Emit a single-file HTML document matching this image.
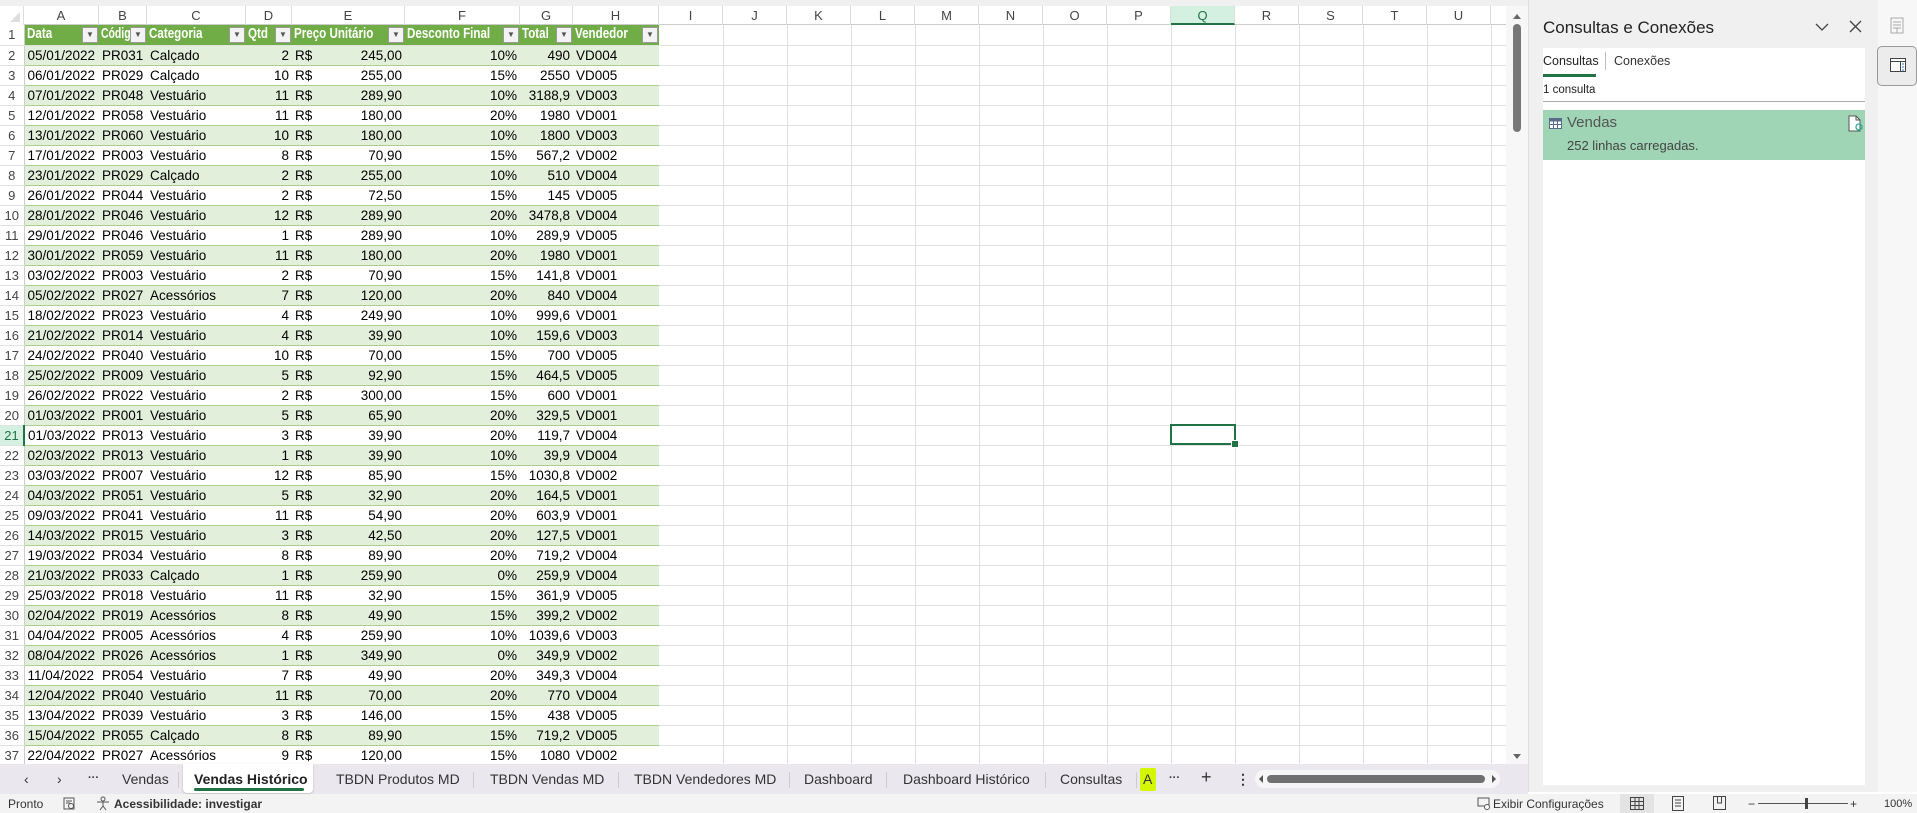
<!DOCTYPE html>
<html><head><meta charset="utf-8">
<style>
*{box-sizing:border-box;margin:0;padding:0}
body{width:1917px;height:813px;overflow:hidden;background:#fff;font-family:"Liberation Sans",sans-serif;position:relative;color:#000}
.top{position:absolute;left:0;top:0;width:1530px;height:6px;background:#f0f0f0}
.colh{position:absolute;top:6px;height:19px;left:0;width:1506px;background:#fff;border-bottom:1px solid #ccc}
.colh div{position:absolute;top:0;height:19px;border-right:1px solid #ddd;text-align:center;font-size:13px;line-height:19px;color:#444}
table{position:absolute;left:0;top:25px;width:1506px;border-collapse:collapse;table-layout:fixed;font-size:13.5px}
td{height:20px;padding:0 3px;white-space:nowrap;overflow:hidden;border-right:1px solid #e1e1e1;border-bottom:1px solid #e1e1e1;line-height:19px}
td.rh{text-align:center;color:#444;padding:0;border-right:1px solid #ccc;font-size:13px}
tr.g td.d{background:#e2efda}
td.d{border-bottom:1px solid #a9d08e;border-right:none}
td.hd{background:#70ad47;color:#fff;font-weight:bold;border-right:none;position:relative;padding:0 0 0 2px;font-size:14.5px}
td.hd span{display:inline-block;transform:scaleX(0.8);transform-origin:0 50%}
td.hd i{position:absolute;right:1px;top:2px;width:16px;height:16px;background:#f3f3f3;border:1px solid #999;font-style:normal;color:#555;font-size:8px;line-height:14px;text-align:center}
.r{text-align:right}
.sel{position:absolute;left:1170px;top:424px;width:66px;height:21px;border:2px solid #217346}
.sel:after{content:"";position:absolute;right:-5px;bottom:-5px;width:6px;height:6px;background:#217346;border:1px solid #fff}
.vs{position:absolute;left:1506px;top:6px;width:22px;height:760px;background:#f7f7f7}
.pbg{position:absolute;left:1528px;top:0;width:350px;height:792px;background:#f0f0f0;border-left:1px solid #ddd}
.side{position:absolute;left:1878px;top:0;width:39px;height:792px;background:#f7f7f7}
.tabs{position:absolute;left:0;top:764px;width:1528px;height:30px;background:#ebe7ee}
.tabs span{position:absolute;top:7px;font-size:14px;color:#333}
.tabs b.sep{position:absolute;top:8px;width:1px;height:16px;background:#ccc}
.status{position:absolute;left:0;top:794px;width:1917px;height:19px;background:#f3f3f3;font-size:12px;color:#333}
.status span{position:absolute;top:3px}
</style></head><body>
<div class="top"></div>
<div class="colh">
<div style="left:0;width:24px;background:#fff"><svg width="24" height="19"><path d="M20 16 L20 6 L10 16Z" fill="#ddd"/></svg></div>
<div style="left:24px;width:75px">A</div><div style="left:99px;width:48px">B</div><div style="left:147px;width:99px">C</div><div style="left:246px;width:46px">D</div><div style="left:292px;width:113px">E</div><div style="left:405px;width:115px">F</div><div style="left:520px;width:53px">G</div><div style="left:573px;width:86px">H</div>
<div style="left:659px;width:64px">I</div><div style="left:723px;width:64px">J</div><div style="left:787px;width:64px">K</div><div style="left:851px;width:64px">L</div><div style="left:915px;width:64px">M</div><div style="left:979px;width:64px">N</div><div style="left:1043px;width:64px">O</div><div style="left:1107px;width:64px">P</div><div style="left:1171px;width:64px;background:#d3f0e0;border-bottom:2px solid #217346;color:#217346">Q</div><div style="left:1235px;width:64px">R</div><div style="left:1299px;width:64px">S</div><div style="left:1363px;width:64px">T</div><div style="left:1427px;width:64px">U</div>
</div>
<table>
<colgroup><col style="width:24px"><col style="width:75px"><col style="width:48px"><col style="width:99px"><col style="width:46px"><col style="width:30px"><col style="width:83px"><col style="width:115px"><col style="width:53px"><col style="width:86px"><col style="width:64px"><col style="width:64px"><col style="width:64px"><col style="width:64px"><col style="width:64px"><col style="width:64px"><col style="width:64px"><col style="width:64px"><col style="width:64px"><col style="width:64px"><col style="width:64px"><col style="width:64px"><col style="width:64px"><col style="width:15px"></colgroup>
<tr><td class="rh">1</td><td class="hd"><span>Data</span><i>▼</i></td><td class="hd"><span style="transform:scaleX(0.72)">Código</span><i>▼</i></td><td class="hd"><span>Categoria</span><i>▼</i></td><td class="hd"><span>Qtd</span><i>▼</i></td><td class="hd" colspan="2"><span>Preço Unitário</span><i>▼</i></td><td class="hd"><span>Desconto Final</span><i>▼</i></td><td class="hd"><span>Total</span><i>▼</i></td><td class="hd"><span>Vendedor</span><i>▼</i></td><td></td><td></td><td></td><td></td><td></td><td></td><td></td><td></td><td></td><td></td><td></td><td></td><td></td><td></td></tr>
<tr class="g"><td class="rh">2</td><td class="d">05/01/2022</td><td class="d">PR031</td><td class="d">Calçado</td><td class="d r">2</td><td class="d">R$</td><td class="d r">245,00</td><td class="d r">10%</td><td class="d r">490</td><td class="d">VD004</td><td></td><td></td><td></td><td></td><td></td><td></td><td></td><td></td><td></td><td></td><td></td><td></td><td></td><td></td></tr>
<tr><td class="rh">3</td><td class="d">06/01/2022</td><td class="d">PR029</td><td class="d">Calçado</td><td class="d r">10</td><td class="d">R$</td><td class="d r">255,00</td><td class="d r">15%</td><td class="d r">2550</td><td class="d">VD005</td><td></td><td></td><td></td><td></td><td></td><td></td><td></td><td></td><td></td><td></td><td></td><td></td><td></td><td></td></tr>
<tr class="g"><td class="rh">4</td><td class="d">07/01/2022</td><td class="d">PR048</td><td class="d">Vestuário</td><td class="d r">11</td><td class="d">R$</td><td class="d r">289,90</td><td class="d r">10%</td><td class="d r">3188,9</td><td class="d">VD003</td><td></td><td></td><td></td><td></td><td></td><td></td><td></td><td></td><td></td><td></td><td></td><td></td><td></td><td></td></tr>
<tr><td class="rh">5</td><td class="d">12/01/2022</td><td class="d">PR058</td><td class="d">Vestuário</td><td class="d r">11</td><td class="d">R$</td><td class="d r">180,00</td><td class="d r">20%</td><td class="d r">1980</td><td class="d">VD001</td><td></td><td></td><td></td><td></td><td></td><td></td><td></td><td></td><td></td><td></td><td></td><td></td><td></td><td></td></tr>
<tr class="g"><td class="rh">6</td><td class="d">13/01/2022</td><td class="d">PR060</td><td class="d">Vestuário</td><td class="d r">10</td><td class="d">R$</td><td class="d r">180,00</td><td class="d r">10%</td><td class="d r">1800</td><td class="d">VD003</td><td></td><td></td><td></td><td></td><td></td><td></td><td></td><td></td><td></td><td></td><td></td><td></td><td></td><td></td></tr>
<tr><td class="rh">7</td><td class="d">17/01/2022</td><td class="d">PR003</td><td class="d">Vestuário</td><td class="d r">8</td><td class="d">R$</td><td class="d r">70,90</td><td class="d r">15%</td><td class="d r">567,2</td><td class="d">VD002</td><td></td><td></td><td></td><td></td><td></td><td></td><td></td><td></td><td></td><td></td><td></td><td></td><td></td><td></td></tr>
<tr class="g"><td class="rh">8</td><td class="d">23/01/2022</td><td class="d">PR029</td><td class="d">Calçado</td><td class="d r">2</td><td class="d">R$</td><td class="d r">255,00</td><td class="d r">10%</td><td class="d r">510</td><td class="d">VD004</td><td></td><td></td><td></td><td></td><td></td><td></td><td></td><td></td><td></td><td></td><td></td><td></td><td></td><td></td></tr>
<tr><td class="rh">9</td><td class="d">26/01/2022</td><td class="d">PR044</td><td class="d">Vestuário</td><td class="d r">2</td><td class="d">R$</td><td class="d r">72,50</td><td class="d r">15%</td><td class="d r">145</td><td class="d">VD005</td><td></td><td></td><td></td><td></td><td></td><td></td><td></td><td></td><td></td><td></td><td></td><td></td><td></td><td></td></tr>
<tr class="g"><td class="rh">10</td><td class="d">28/01/2022</td><td class="d">PR046</td><td class="d">Vestuário</td><td class="d r">12</td><td class="d">R$</td><td class="d r">289,90</td><td class="d r">20%</td><td class="d r">3478,8</td><td class="d">VD004</td><td></td><td></td><td></td><td></td><td></td><td></td><td></td><td></td><td></td><td></td><td></td><td></td><td></td><td></td></tr>
<tr><td class="rh">11</td><td class="d">29/01/2022</td><td class="d">PR046</td><td class="d">Vestuário</td><td class="d r">1</td><td class="d">R$</td><td class="d r">289,90</td><td class="d r">10%</td><td class="d r">289,9</td><td class="d">VD005</td><td></td><td></td><td></td><td></td><td></td><td></td><td></td><td></td><td></td><td></td><td></td><td></td><td></td><td></td></tr>
<tr class="g"><td class="rh">12</td><td class="d">30/01/2022</td><td class="d">PR059</td><td class="d">Vestuário</td><td class="d r">11</td><td class="d">R$</td><td class="d r">180,00</td><td class="d r">20%</td><td class="d r">1980</td><td class="d">VD001</td><td></td><td></td><td></td><td></td><td></td><td></td><td></td><td></td><td></td><td></td><td></td><td></td><td></td><td></td></tr>
<tr><td class="rh">13</td><td class="d">03/02/2022</td><td class="d">PR003</td><td class="d">Vestuário</td><td class="d r">2</td><td class="d">R$</td><td class="d r">70,90</td><td class="d r">15%</td><td class="d r">141,8</td><td class="d">VD001</td><td></td><td></td><td></td><td></td><td></td><td></td><td></td><td></td><td></td><td></td><td></td><td></td><td></td><td></td></tr>
<tr class="g"><td class="rh">14</td><td class="d">05/02/2022</td><td class="d">PR027</td><td class="d">Acessórios</td><td class="d r">7</td><td class="d">R$</td><td class="d r">120,00</td><td class="d r">20%</td><td class="d r">840</td><td class="d">VD004</td><td></td><td></td><td></td><td></td><td></td><td></td><td></td><td></td><td></td><td></td><td></td><td></td><td></td><td></td></tr>
<tr><td class="rh">15</td><td class="d">18/02/2022</td><td class="d">PR023</td><td class="d">Vestuário</td><td class="d r">4</td><td class="d">R$</td><td class="d r">249,90</td><td class="d r">10%</td><td class="d r">999,6</td><td class="d">VD001</td><td></td><td></td><td></td><td></td><td></td><td></td><td></td><td></td><td></td><td></td><td></td><td></td><td></td><td></td></tr>
<tr class="g"><td class="rh">16</td><td class="d">21/02/2022</td><td class="d">PR014</td><td class="d">Vestuário</td><td class="d r">4</td><td class="d">R$</td><td class="d r">39,90</td><td class="d r">10%</td><td class="d r">159,6</td><td class="d">VD003</td><td></td><td></td><td></td><td></td><td></td><td></td><td></td><td></td><td></td><td></td><td></td><td></td><td></td><td></td></tr>
<tr><td class="rh">17</td><td class="d">24/02/2022</td><td class="d">PR040</td><td class="d">Vestuário</td><td class="d r">10</td><td class="d">R$</td><td class="d r">70,00</td><td class="d r">15%</td><td class="d r">700</td><td class="d">VD005</td><td></td><td></td><td></td><td></td><td></td><td></td><td></td><td></td><td></td><td></td><td></td><td></td><td></td><td></td></tr>
<tr class="g"><td class="rh">18</td><td class="d">25/02/2022</td><td class="d">PR009</td><td class="d">Vestuário</td><td class="d r">5</td><td class="d">R$</td><td class="d r">92,90</td><td class="d r">15%</td><td class="d r">464,5</td><td class="d">VD005</td><td></td><td></td><td></td><td></td><td></td><td></td><td></td><td></td><td></td><td></td><td></td><td></td><td></td><td></td></tr>
<tr><td class="rh">19</td><td class="d">26/02/2022</td><td class="d">PR022</td><td class="d">Vestuário</td><td class="d r">2</td><td class="d">R$</td><td class="d r">300,00</td><td class="d r">15%</td><td class="d r">600</td><td class="d">VD001</td><td></td><td></td><td></td><td></td><td></td><td></td><td></td><td></td><td></td><td></td><td></td><td></td><td></td><td></td></tr>
<tr class="g"><td class="rh">20</td><td class="d">01/03/2022</td><td class="d">PR001</td><td class="d">Vestuário</td><td class="d r">5</td><td class="d">R$</td><td class="d r">65,90</td><td class="d r">20%</td><td class="d r">329,5</td><td class="d">VD001</td><td></td><td></td><td></td><td></td><td></td><td></td><td></td><td></td><td></td><td></td><td></td><td></td><td></td><td></td></tr>
<tr><td class="rh" style="background:#d3f0e0;color:#217346;border-right:2px solid #217346">21</td><td class="d">01/03/2022</td><td class="d">PR013</td><td class="d">Vestuário</td><td class="d r">3</td><td class="d">R$</td><td class="d r">39,90</td><td class="d r">20%</td><td class="d r">119,7</td><td class="d">VD004</td><td></td><td></td><td></td><td></td><td></td><td></td><td></td><td></td><td></td><td></td><td></td><td></td><td></td><td></td></tr>
<tr class="g"><td class="rh">22</td><td class="d">02/03/2022</td><td class="d">PR013</td><td class="d">Vestuário</td><td class="d r">1</td><td class="d">R$</td><td class="d r">39,90</td><td class="d r">10%</td><td class="d r">39,9</td><td class="d">VD004</td><td></td><td></td><td></td><td></td><td></td><td></td><td></td><td></td><td></td><td></td><td></td><td></td><td></td><td></td></tr>
<tr><td class="rh">23</td><td class="d">03/03/2022</td><td class="d">PR007</td><td class="d">Vestuário</td><td class="d r">12</td><td class="d">R$</td><td class="d r">85,90</td><td class="d r">15%</td><td class="d r">1030,8</td><td class="d">VD002</td><td></td><td></td><td></td><td></td><td></td><td></td><td></td><td></td><td></td><td></td><td></td><td></td><td></td><td></td></tr>
<tr class="g"><td class="rh">24</td><td class="d">04/03/2022</td><td class="d">PR051</td><td class="d">Vestuário</td><td class="d r">5</td><td class="d">R$</td><td class="d r">32,90</td><td class="d r">20%</td><td class="d r">164,5</td><td class="d">VD001</td><td></td><td></td><td></td><td></td><td></td><td></td><td></td><td></td><td></td><td></td><td></td><td></td><td></td><td></td></tr>
<tr><td class="rh">25</td><td class="d">09/03/2022</td><td class="d">PR041</td><td class="d">Vestuário</td><td class="d r">11</td><td class="d">R$</td><td class="d r">54,90</td><td class="d r">20%</td><td class="d r">603,9</td><td class="d">VD001</td><td></td><td></td><td></td><td></td><td></td><td></td><td></td><td></td><td></td><td></td><td></td><td></td><td></td><td></td></tr>
<tr class="g"><td class="rh">26</td><td class="d">14/03/2022</td><td class="d">PR015</td><td class="d">Vestuário</td><td class="d r">3</td><td class="d">R$</td><td class="d r">42,50</td><td class="d r">20%</td><td class="d r">127,5</td><td class="d">VD001</td><td></td><td></td><td></td><td></td><td></td><td></td><td></td><td></td><td></td><td></td><td></td><td></td><td></td><td></td></tr>
<tr><td class="rh">27</td><td class="d">19/03/2022</td><td class="d">PR034</td><td class="d">Vestuário</td><td class="d r">8</td><td class="d">R$</td><td class="d r">89,90</td><td class="d r">20%</td><td class="d r">719,2</td><td class="d">VD004</td><td></td><td></td><td></td><td></td><td></td><td></td><td></td><td></td><td></td><td></td><td></td><td></td><td></td><td></td></tr>
<tr class="g"><td class="rh">28</td><td class="d">21/03/2022</td><td class="d">PR033</td><td class="d">Calçado</td><td class="d r">1</td><td class="d">R$</td><td class="d r">259,90</td><td class="d r">0%</td><td class="d r">259,9</td><td class="d">VD004</td><td></td><td></td><td></td><td></td><td></td><td></td><td></td><td></td><td></td><td></td><td></td><td></td><td></td><td></td></tr>
<tr><td class="rh">29</td><td class="d">25/03/2022</td><td class="d">PR018</td><td class="d">Vestuário</td><td class="d r">11</td><td class="d">R$</td><td class="d r">32,90</td><td class="d r">15%</td><td class="d r">361,9</td><td class="d">VD005</td><td></td><td></td><td></td><td></td><td></td><td></td><td></td><td></td><td></td><td></td><td></td><td></td><td></td><td></td></tr>
<tr class="g"><td class="rh">30</td><td class="d">02/04/2022</td><td class="d">PR019</td><td class="d">Acessórios</td><td class="d r">8</td><td class="d">R$</td><td class="d r">49,90</td><td class="d r">15%</td><td class="d r">399,2</td><td class="d">VD002</td><td></td><td></td><td></td><td></td><td></td><td></td><td></td><td></td><td></td><td></td><td></td><td></td><td></td><td></td></tr>
<tr><td class="rh">31</td><td class="d">04/04/2022</td><td class="d">PR005</td><td class="d">Acessórios</td><td class="d r">4</td><td class="d">R$</td><td class="d r">259,90</td><td class="d r">10%</td><td class="d r">1039,6</td><td class="d">VD003</td><td></td><td></td><td></td><td></td><td></td><td></td><td></td><td></td><td></td><td></td><td></td><td></td><td></td><td></td></tr>
<tr class="g"><td class="rh">32</td><td class="d">08/04/2022</td><td class="d">PR026</td><td class="d">Acessórios</td><td class="d r">1</td><td class="d">R$</td><td class="d r">349,90</td><td class="d r">0%</td><td class="d r">349,9</td><td class="d">VD002</td><td></td><td></td><td></td><td></td><td></td><td></td><td></td><td></td><td></td><td></td><td></td><td></td><td></td><td></td></tr>
<tr><td class="rh">33</td><td class="d">11/04/2022</td><td class="d">PR054</td><td class="d">Vestuário</td><td class="d r">7</td><td class="d">R$</td><td class="d r">49,90</td><td class="d r">20%</td><td class="d r">349,3</td><td class="d">VD004</td><td></td><td></td><td></td><td></td><td></td><td></td><td></td><td></td><td></td><td></td><td></td><td></td><td></td><td></td></tr>
<tr class="g"><td class="rh">34</td><td class="d">12/04/2022</td><td class="d">PR040</td><td class="d">Vestuário</td><td class="d r">11</td><td class="d">R$</td><td class="d r">70,00</td><td class="d r">20%</td><td class="d r">770</td><td class="d">VD004</td><td></td><td></td><td></td><td></td><td></td><td></td><td></td><td></td><td></td><td></td><td></td><td></td><td></td><td></td></tr>
<tr><td class="rh">35</td><td class="d">13/04/2022</td><td class="d">PR039</td><td class="d">Vestuário</td><td class="d r">3</td><td class="d">R$</td><td class="d r">146,00</td><td class="d r">15%</td><td class="d r">438</td><td class="d">VD005</td><td></td><td></td><td></td><td></td><td></td><td></td><td></td><td></td><td></td><td></td><td></td><td></td><td></td><td></td></tr>
<tr class="g"><td class="rh">36</td><td class="d">15/04/2022</td><td class="d">PR055</td><td class="d">Calçado</td><td class="d r">8</td><td class="d">R$</td><td class="d r">89,90</td><td class="d r">15%</td><td class="d r">719,2</td><td class="d">VD005</td><td></td><td></td><td></td><td></td><td></td><td></td><td></td><td></td><td></td><td></td><td></td><td></td><td></td><td></td></tr>
<tr><td class="rh">37</td><td class="d">22/04/2022</td><td class="d">PR027</td><td class="d">Acessórios</td><td class="d r">9</td><td class="d">R$</td><td class="d r">120,00</td><td class="d r">15%</td><td class="d r">1080</td><td class="d">VD002</td><td></td><td></td><td></td><td></td><td></td><td></td><td></td><td></td><td></td><td></td><td></td><td></td><td></td><td></td></tr>
</table>
<div class="sel"></div>
<div class="vs">
<svg width="22" height="760" style="position:absolute;left:0;top:0"><path d="M7 13 L11 8 L15 13Z" fill="#666"/><rect x="7" y="18" width="8" height="108" rx="4" fill="#777"/><path d="M7 748 L11 753 L15 748Z" fill="#666"/></svg>
</div>
<div class="pbg">
<div style="position:absolute;left:14px;top:18px;font-size:17px;color:#222">Consultas e Conexões</div>
<svg style="position:absolute;left:286px;top:22px" width="14" height="10"><path d="M1 2 L7 8 L13 2" stroke="#444" fill="none" stroke-width="1.3"/></svg>
<svg style="position:absolute;left:320px;top:20px" width="13" height="13"><path d="M1 1 L12 12 M12 1 L1 12" stroke="#444" stroke-width="1.3"/></svg>
<div style="position:absolute;left:14px;top:48px;width:322px;height:737px;background:#fff">
<div style="position:absolute;left:0;top:6px;font-size:12.5px;color:#222">Consultas</div>
<div style="position:absolute;left:0;top:26px;width:53px;height:3px;background:#217346"></div>
<div style="position:absolute;left:62px;top:4px;width:1px;height:18px;background:#bbb"></div>
<div style="position:absolute;left:71px;top:6px;font-size:12.5px;color:#333">Conexões</div>
<div style="position:absolute;left:0;top:36px;font-size:11.5px;color:#222">1 consulta</div>
<div style="position:absolute;left:0;top:53px;width:322px;height:1px;background:#aaa"></div>
<div style="position:absolute;left:0;top:62px;width:322px;height:50px;background:#9fd4b5">
<svg style="position:absolute;left:6px;top:8px" width="13" height="11"><rect x="0.5" y="0.5" width="12" height="10" fill="#fff" stroke="#5a6a8a"/><rect x="0.5" y="0.5" width="12" height="3" fill="#5a6a8a"/><path d="M4.5 3 V11 M8.5 3 V11 M0 6.5 H13" stroke="#5a6a8a"/></svg>
<div style="position:absolute;left:24px;top:4px;font-size:15px;color:#555">Vendas</div>
<div style="position:absolute;left:24px;top:28px;font-size:13px;color:#444">252 linhas carregadas.</div>
<svg style="position:absolute;left:305px;top:5px" width="15" height="17"><path d="M1 1 H8 L12 5 V16 H1Z" fill="#fff" stroke="#555"/><path d="M8 1 V5 H12" fill="none" stroke="#555"/><circle cx="11" cy="12" r="3" fill="none" stroke="#3a9" stroke-width="1.3"/></svg>
</div>
</div>
</div>
<div class="side">
<svg style="position:absolute;left:12px;top:17px" width="14" height="17"><rect x="1" y="1" width="12" height="15" fill="none" stroke="#aaa"/><path d="M3 5 H11 M3 8 H11 M3 11 H11 M7 11 V16" stroke="#aaa"/></svg>
<div style="position:absolute;left:-1px;top:46px;width:40px;height:40px;border:1px solid #999;border-radius:5px;background:#ececec"></div>
<svg style="position:absolute;left:12px;top:58px" width="16" height="14"><rect x="0.5" y="0.5" width="15" height="13" fill="#fff" stroke="#444"/><path d="M0 3.5 H16 M10.5 3 V14" stroke="#444"/><path d="M12 6 H14 M12 9 H14 M12 12 H14" stroke="#2b7bd6"/></svg>
</div>
<div class="tabs">
<span style="left:24px">&#8249;</span><span style="left:57px">&#8250;</span><span style="left:88px;font-weight:bold;font-size:11px;top:8px">···</span>
<span style="left:122px">Vendas</span><b class="sep" style="left:178px"></b>
<div style="position:absolute;left:183px;top:0;width:130px;height:29px;background:#fff;border-radius:0 0 4px 4px;box-shadow:0 1px 2px #bbb"></div>
<span style="left:194px;font-weight:bold;color:#222">Vendas Histórico</span>
<div style="position:absolute;left:194px;top:24px;width:110px;height:3px;background:#217346;border-radius:2px"></div>
<span style="left:336px">TBDN Produtos MD</span><b class="sep" style="left:473px"></b>
<span style="left:490px">TBDN Vendas MD</span><b class="sep" style="left:618px"></b>
<span style="left:634px">TBDN Vendedores MD</span><b class="sep" style="left:789px"></b>
<span style="left:804px">Dashboard</span><b class="sep" style="left:886px"></b>
<span style="left:903px">Dashboard Histórico</span><b class="sep" style="left:1045px"></b>
<span style="left:1060px">Consultas</span><b class="sep" style="left:1136px"></b>
<div style="position:absolute;left:1140px;top:4px;width:16px;height:23px;background:#d4f700;border-radius:2px"></div>
<span style="left:1143px">A</span>
<span style="left:1169px;font-weight:bold;font-size:11px;top:8px">···</span>
<span style="left:1201px;font-size:18px;top:3px">+</span>
<span style="left:1236px;font-weight:bold">&#8942;</span>
<div style="position:absolute;left:1255px;top:6px;width:245px;height:18px;background:#f6f6f6;border-radius:9px"></div>
<svg style="position:absolute;left:1258px;top:10px" width="240" height="10"><path d="M5 1 L1 5 L5 9Z" fill="#555"/><rect x="9" y="1" width="218" height="8" rx="4" fill="#707070"/><path d="M234 1 L238 5 L234 9Z" fill="#555"/></svg>
</div>
<div class="status">
<span style="left:8px">Pronto</span>
<svg style="position:absolute;left:63px;top:3px" width="13" height="13"><rect x="1" y="1" width="10" height="11" fill="none" stroke="#555"/><path d="M3 4 H9 M3 6 H7" stroke="#555"/><circle cx="8" cy="9" r="2.5" fill="none" stroke="#555"/></svg>
<svg style="position:absolute;left:96px;top:2px" width="14" height="15"><circle cx="7" cy="3" r="2" fill="none" stroke="#555"/><path d="M1 6 H13 M7 6 V10 L4 14 M7 10 L10 14" stroke="#555" fill="none"/></svg>
<span style="left:114px;font-weight:bold;color:#333">Acessibilidade: investigar</span>
<svg style="position:absolute;left:1477px;top:3px" width="14" height="13"><rect x="1" y="1" width="11" height="8" fill="none" stroke="#555"/><circle cx="10" cy="10" r="2.5" fill="#fff" stroke="#555"/></svg>
<span style="left:1493px">Exibir Configurações</span>
<div style="position:absolute;left:1620px;top:0;width:34px;height:19px;background:#e3e3e3"></div>
<svg style="position:absolute;left:1630px;top:3px" width="14" height="13"><rect x="0.5" y="0.5" width="13" height="12" fill="none" stroke="#444"/><path d="M5 0 V13 M9 0 V13 M0 4.5 H14 M0 8.5 H14" stroke="#444"/></svg>
<svg style="position:absolute;left:1672px;top:2px" width="12" height="15"><rect x="0.5" y="0.5" width="11" height="14" fill="none" stroke="#444"/><path d="M3 4 H9 M3 7 H9 M3 10 H9" stroke="#444"/></svg>
<svg style="position:absolute;left:1713px;top:2px" width="13" height="14"><path d="M0.5 0.5 H12.5 V13.5 H0.5Z M4.5 0 V7 H8.5 V0" fill="none" stroke="#444"/></svg>
<span style="left:1748px">−</span>
<div style="position:absolute;left:1758px;top:9px;width:90px;height:1px;background:#555"></div>
<div style="position:absolute;left:1805px;top:4px;width:3px;height:11px;background:#444"></div>
<span style="left:1850px">+</span>
<span style="left:1884px;font-size:11px;top:4px">100%</span>
</div>
</body></html>
